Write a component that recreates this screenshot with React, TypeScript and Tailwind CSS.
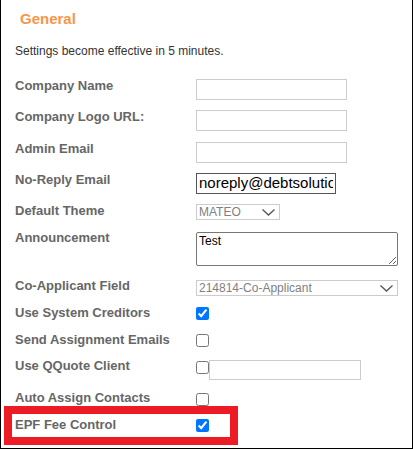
import React from "react";

const labelClass =
  "w-[181px] shrink-0 text-[13px] leading-[16px] font-bold text-[#666]";
const textInput =
  "h-[21px] border border-[#ccc] px-[2px] text-[13.33px] text-black outline-none";

function Chevron() {
  return (
    <svg width="13" height="7" viewBox="0 0 13 7" className="shrink-0">
      <path d="M0.5 0.5 L6.5 6 L12.5 0.5" fill="none" stroke="#555" strokeWidth="1.3" />
    </svg>
  );
}

function FakeSelect({ value, className }: { value: string; className: string }) {
  return (
    <div
      className={`h-[16px] border border-[#ccc] flex items-center justify-between pl-[2px] pr-[4px] text-[12px] leading-[14px] text-[#808080] ${className}`}
    >
      <span>{value}</span>
      <Chevron />
    </div>
  );
}

function Row({
  label,
  h,
  children,
}: {
  label: string;
  h: string;
  children?: React.ReactNode;
}) {
  return (
    <div className={`flex items-start ${h}`}>
      <div className={labelClass}>{label}</div>
      <div className="flex items-start">{children}</div>
    </div>
  );
}

export default function App() {
  return (
    <div className="w-[413px] h-[449px] border-x border-b border-black bg-white overflow-hidden font-['Liberation_Sans',Arial,sans-serif]">
      <h2 className="pl-[19px] pt-[10px] text-[15px] leading-[18px] font-bold text-[#f7964a]">
        General
      </h2>
      <p className="pl-[14px] mt-[16px] text-[12px] leading-[14px] text-[#333]">
        Settings become effective in 5 minutes.
      </p>

      <div className="pl-[14px] mt-[20px]">
        <Row label="Company Name" h="h-[31px]">
          <input type="text" className={`${textInput} mt-px w-[151px]`} />
        </Row>
        <Row label="Company Logo URL:" h="h-[32px]">
          <input type="text" className={`${textInput} mt-px w-[151px]`} />
        </Row>
        <Row label="Admin Email" h="h-[31px]">
          <input type="text" className={`${textInput} mt-px w-[151px]`} />
        </Row>
        <Row label="No-Reply Email" h="h-[31px]">
          <input
            type="text"
            defaultValue="noreply@debtsolutions.com"
            className="mt-px w-[140px] h-[21px] border border-[#555] px-[2px] text-[15px] text-black outline-none"
          />
        </Row>
        <Row label="Default Theme" h="h-[27px]">
          <FakeSelect value="MATEO" className="mt-px w-[84px]" />
        </Row>
        <Row label="Announcement" h="h-[48px]">
          <textarea
            defaultValue="Test"
            className="mt-[2px] w-[202px] h-[34px] border border-[#767676] rounded-[2px] pt-px px-[2px] text-[12px] leading-[14px] text-black resize outline-none"
          />
        </Row>
        <Row label="Co-Applicant Field" h="h-[27px]">
          <FakeSelect value="214814-Co-Applicant" className="mt-[2px] w-[202px]" />
        </Row>
        <Row label="Use System Creditors" h="h-[27px]">
          <input type="checkbox" defaultChecked className="mt-[2px] w-[13px] h-[13px]" />
        </Row>
        <Row label="Send Assignment Emails" h="h-[26px]">
          <input type="checkbox" className="mt-[2px] w-[13px] h-[13px]" />
        </Row>
        <Row label="Use QQuote Client" h="h-[32px]">
          <input type="checkbox" className="mt-[3px] w-[13px] h-[13px]" />
          <input type="text" className="mt-[2px] w-[152px] h-[20px] border border-[#ccc] outline-none" />
        </Row>
        <Row label="Auto Assign Contacts" h="h-[16px]">
          <input type="checkbox" className="mt-[3px] w-[13px] h-[13px]" />
        </Row>
        <div className="-ml-[11px] w-[234px] h-[39px] border-[8px] border-[#ed1c24] pt-[3px] pl-[3px]">
          <Row label="EPF Fee Control" h="h-[20px]">
            <input type="checkbox" defaultChecked className="mt-[2px] w-[13px] h-[13px]" />
          </Row>
        </div>
      </div>
    </div>
  );
}
